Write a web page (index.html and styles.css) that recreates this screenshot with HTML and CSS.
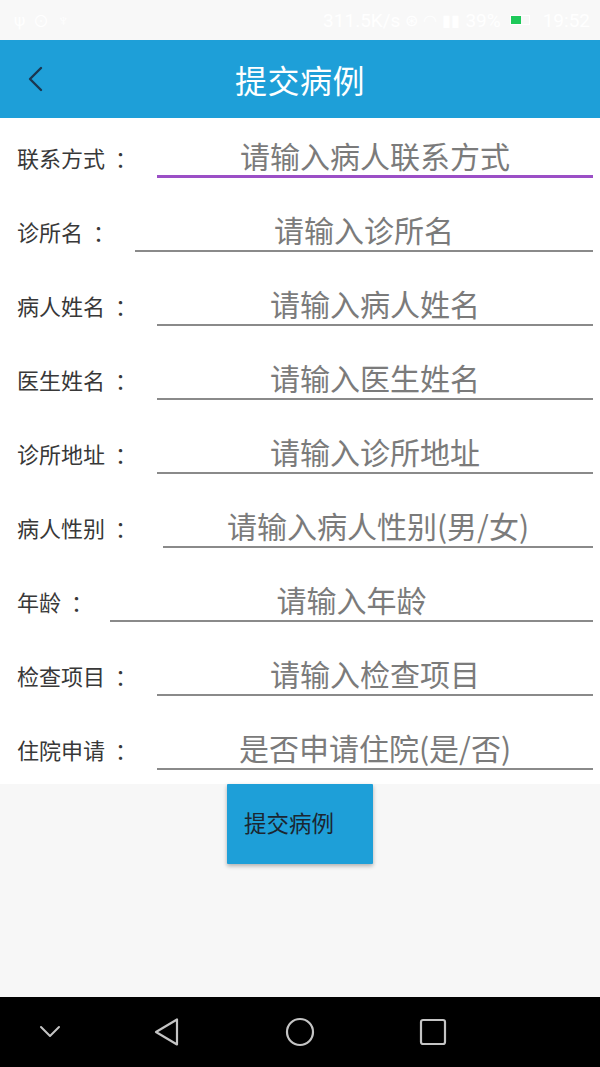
FILE: index.html
```html
<!DOCTYPE html>
<html lang="zh-CN">
<head>
<meta charset="utf-8">
<title>提交病例</title>
<link rel="stylesheet" href="styles.css">
</head>
<body>
<div class="screen">
  <div class="statusbar">
    <div class="sb-left">
      <span class="sb-ico">ψ</span><span class="sb-ico">⊙</span><span class="sb-ico">♆</span>
    </div>
    <div class="sb-right">
      <span>311.5K/s</span>
      <span class="sb-ico">⊛</span>
      <span class="sb-ico">◠</span>
      <span class="sb-ico">▮▮</span>
      <span>39%</span>
      <span class="battery"><span class="battery-fill"></span></span>
      <span>19:52</span>
    </div>
  </div>

  <header class="appbar">
    <button class="back" aria-label="返回">
      <svg width="20" height="28" viewBox="0 0 20 28"><path d="M15 3 L4 14 L15 25" fill="none" stroke="#1b3650" stroke-width="2.4" stroke-linecap="round" stroke-linejoin="round"/></svg>
    </button>
    <h1 class="title">提交病例</h1>
    <span class="spacer"></span>
  </header>

  <main class="content">
    <form class="form">
      <div class="row">
        <label class="label">联系方式<span class="colon">：</span></label>
        <input class="field focused" placeholder="请输入病人联系方式">
      </div>
      <div class="row">
        <label class="label">诊所名<span class="colon">：</span></label>
        <input class="field" placeholder="请输入诊所名">
      </div>
      <div class="row">
        <label class="label">病人姓名<span class="colon">：</span></label>
        <input class="field" placeholder="请输入病人姓名">
      </div>
      <div class="row">
        <label class="label">医生姓名<span class="colon">：</span></label>
        <input class="field" placeholder="请输入医生姓名">
      </div>
      <div class="row">
        <label class="label">诊所地址<span class="colon">：</span></label>
        <input class="field" placeholder="请输入诊所地址">
      </div>
      <div class="row">
        <label class="label wide">病人性别<span class="colon">：</span></label>
        <input class="field" placeholder="请输入病人性别(男/女)">
      </div>
      <div class="row">
        <label class="label narrow">年龄<span class="colon">：</span></label>
        <input class="field" placeholder="请输入年龄">
      </div>
      <div class="row">
        <label class="label">检查项目<span class="colon">：</span></label>
        <input class="field" placeholder="请输入检查项目">
      </div>
      <div class="row">
        <label class="label">住院申请<span class="colon">：</span></label>
        <input class="field" placeholder="是否申请住院(是/否)">
      </div>
    </form>
    <div class="actions">
      <button class="submit" type="button">提交病例</button>
    </div>
  </main>

  <nav class="navbar">
    <svg class="nav-ico" width="24" height="16" viewBox="0 0 24 16"><path d="M3 3 L12 12 L21 3" fill="none" stroke="#c4c4c4" stroke-width="2" stroke-linecap="round" stroke-linejoin="round"/></svg>
    <svg class="nav-ico" width="28" height="30" viewBox="0 0 28 30"><path d="M24 2.5 L24 27.5 L3 15 Z" fill="none" stroke="#c4c4c4" stroke-width="2.2" stroke-linejoin="round"/></svg>
    <svg class="nav-ico" width="30" height="30" viewBox="0 0 30 30"><ellipse cx="15" cy="15" rx="13" ry="13" fill="none" stroke="#c4c4c4" stroke-width="2.2"/></svg>
    <svg class="nav-ico" width="28" height="28" viewBox="0 0 28 28"><rect x="2" y="2" width="24" height="24" rx="2" fill="none" stroke="#c4c4c4" stroke-width="2.2"/></svg>
  </nav>
</div>
</body>
</html>
```

FILE: styles.css
```css
* { box-sizing: border-box; }

html, body {
  margin: 0;
  padding: 0;
}

body {
  font-family: "Noto Sans CJK SC", "Noto Sans", sans-serif;
  background: #f7f7f7;
}

.screen {
  width: 600px;
  height: 1067px;
  display: flex;
  flex-direction: column;
  overflow: hidden;
}

/* status bar */
.statusbar {
  height: 40px;
  flex: none;
  background: #f8f8f8;
  color: #ffffff;
  font-family: Roboto, "Noto Sans", sans-serif;
  font-size: 19px;
  display: flex;
  align-items: center;
  justify-content: space-between;
  padding: 0 10px 0 14px;
}

.sb-left, .sb-right {
  display: flex;
  align-items: center;
  gap: 8px;
}

.sb-right { gap: 5px; }

.sb-ico { font-size: 16px; }

.battery {
  width: 20px;
  height: 10px;
  display: flex;
  border: 1px solid #ffffff;
  margin: 0 8px 0 4px;
}

.battery-fill {
  width: 10px;
  height: 100%;
  background: #1ec95a;
}

/* app bar */
.appbar {
  height: 78px;
  flex: none;
  background: #1e9fd8;
  display: grid;
  grid-template-columns: 90px 1fr 90px;
  align-items: center;
}

.back {
  border: 0;
  background: none;
  padding: 0 0 0 26px;
  display: flex;
  align-items: center;
  height: 100%;
}

.title {
  margin: 0;
  text-align: center;
  color: #ffffff;
  font-size: 32px;
  font-weight: 400;
  letter-spacing: 0.5px;
}

/* content */
.content {
  flex: 1;
  background: #f7f7f7;
}

.form {
  background: #ffffff;
  margin: 0;
}

.row {
  height: 74px;
  display: flex;
  align-items: flex-end;
  padding: 0 7px 14px 17px;
}

.label {
  font-size: 22px;
  color: #383838;
  line-height: 40px;
  margin-right: 20px;
  margin-bottom: 1px;
  white-space: nowrap;
}

.colon {
  padding-left: 10px;
}

.label.wide { margin-right: 26px; }
.label.narrow { margin-right: 17px; }

.field {
  flex: 1;
  min-width: 0;
  height: 42px;
  border: 0;
  border-bottom: 2px solid #8a8a8a;
  background: transparent;
  outline: none;
  padding: 0 0 3px;
  font-family: "Noto Sans CJK SC", "Noto Sans", sans-serif;
  font-size: 30px;
  color: #333333;
  text-align: center;
}

.field::placeholder {
  color: #7b7b7b;
}

.field.focused {
  border-bottom: 3px solid #9b4fc6;
  padding-bottom: 2px;
}

.actions {
  padding-left: 227px;
}

.submit {
  width: 146px;
  height: 80px;
  margin: 0;
  border: 0;
  border-radius: 1px;
  background: #1e9fd8;
  box-shadow: 0 2px 4px rgba(0, 0, 0, 0.3);
  color: #1b2631;
  font-family: "Noto Sans CJK SC", "Noto Sans", sans-serif;
  font-size: 22.5px;
  text-align: left;
  padding: 0 0 4px 17px;
}

/* nav bar */
.navbar {
  height: 70px;
  flex: none;
  background: #000000;
  display: grid;
  grid-template-columns: 100px 134px 132px 134px 100px;
  align-items: center;
  justify-items: center;
}
```
